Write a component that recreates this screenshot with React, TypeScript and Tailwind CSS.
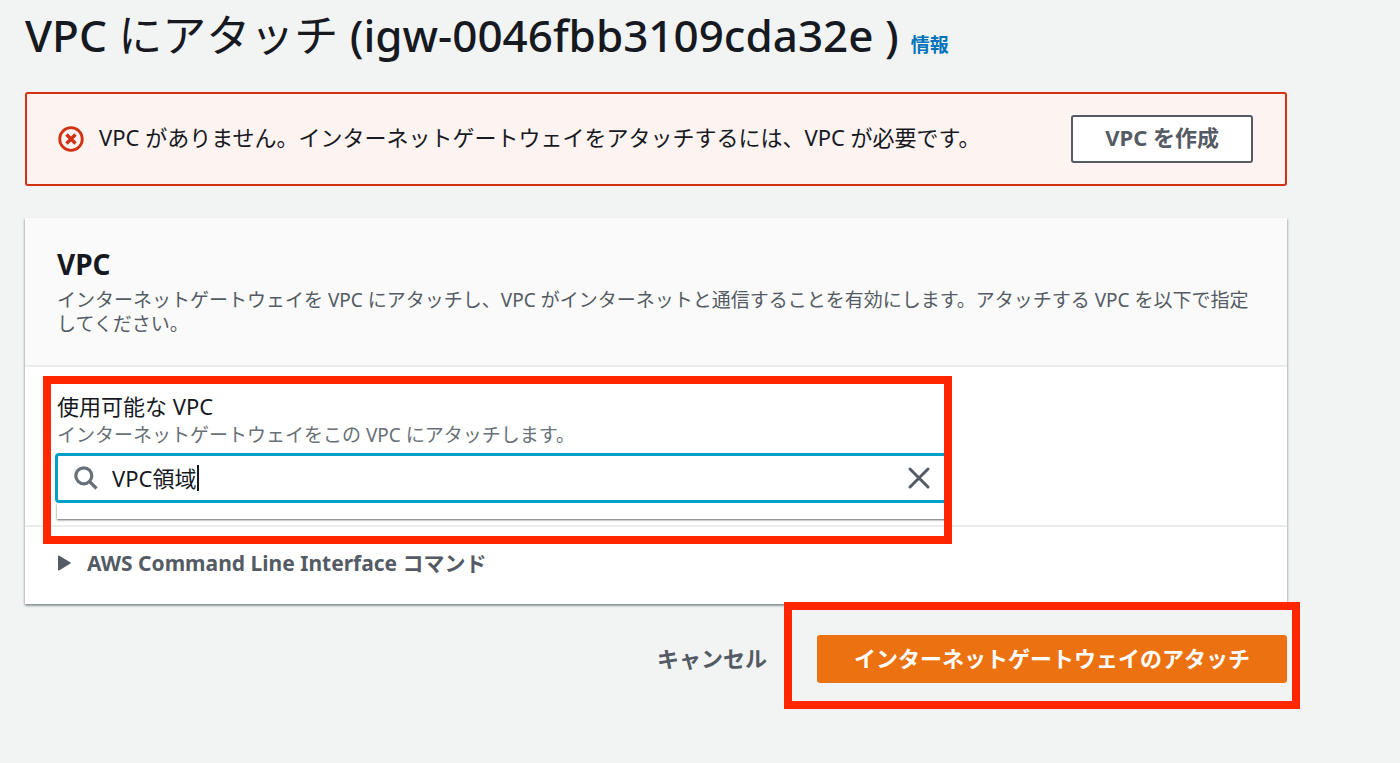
import { useState } from "react";

function ErrorIcon() {
  return (
    <svg className="size-7 shrink-0" viewBox="0 0 28 28" fill="none" stroke="#d13212">
      <circle cx="14" cy="14" r="11.3" strokeWidth="2.8" />
      <path d="M9.5 9.5l9 9M18.5 9.5l-9 9" strokeWidth="3.4" />
    </svg>
  );
}

function SearchIcon() {
  return (
    <svg className="size-6 shrink-0" viewBox="0 0 24 24" fill="none" stroke="#687078" strokeWidth="3.2">
      <circle cx="9.8" cy="9.8" r="8" />
      <path d="M15.5 15.5l7 7" />
    </svg>
  );
}

function CloseIcon() {
  return (
    <svg
      className="size-6"
      viewBox="0 0 24 24"
      fill="none"
      stroke="#545b64"
      strokeWidth="3"
      strokeLinecap="round"
    >
      <path d="M3 3l18 18M21 3L3 21" />
    </svg>
  );
}

function Highlight({ className }: { className: string }) {
  return <div className={`pointer-events-none absolute border-8 border-[#ff2600] ${className}`} />;
}

export default function App() {
  const [search, setSearch] = useState("VPC領域");

  return (
    <div className="min-h-screen bg-[#f2f3f3] pr-[113px] pb-8 pl-[25px] font-['Noto_Sans','Noto_Sans_CJK_JP',sans-serif] text-[22px] leading-7 text-[#16191f]">
      <header className="flex items-baseline gap-3 pt-[5px]">
        <h1 className="text-[44px] leading-[60px] font-medium">
          VPC <span className="font-normal">にアタッチ</span> (igw-0046fbb3109cda32e )
        </h1>
        <a href="#info" className="text-[19px] leading-6 font-bold text-[#0073bb]">
          情報
        </a>
      </header>

      <main>
        <div
          role="alert"
          className="mt-[27px] flex items-center gap-3.5 rounded-[3px] border-2 border-[#d13212] bg-[#fdf3f1] py-[21px] pr-8 pl-[30px]"
        >
          <ErrorIcon />
          <p className="flex-1 pb-1">
            VPC がありません。インターネットゲートウェイをアタッチするには、VPC が必要です。
          </p>
          <button
            type="button"
            className="h-12 rounded-[3px] border-2 border-[#545b64] bg-white px-8 pb-1 font-bold text-[#545b64]"
          >
            VPC を作成
          </button>
        </div>

        <section className="mt-8 bg-white shadow-[0_2px_2px_0_#001c244d,1px_1px_2px_0_#001c2426,-1px_1px_2px_0_#001c2426]">
          <div className="border-b-2 border-[#eaeded] bg-[#fafafa] px-8 pt-7 pb-[29px]">
            <h2 className="text-[28px] leading-9 font-bold">VPC</h2>
            <p className="pt-1.5 text-[19px] leading-6 text-[#545b64]">
              インターネットゲートウェイを VPC にアタッチし、VPC
              がインターネットと通信することを有効にします。アタッチする VPC を以下で指定してください。
            </p>
          </div>

          <div className="border-b-2 border-[#eaeded] px-[30px] pt-[25px] pb-1.5">
            <div className="relative max-w-[893px]">
              <label htmlFor="vpc" className="block pl-0.5">
                使用可能な VPC
              </label>
              <p id="vpc-hint" className="pt-[3px] pb-1.5 pl-0.5 text-[19px] leading-6 text-[#687078]">
                インターネットゲートウェイをこの VPC にアタッチします。
              </p>
              <div className="relative flex h-[50px] items-center gap-3.5 rounded-[4px] border-3 border-[#00a1c9] bg-white pr-3.5 pl-4">
                <SearchIcon />
                <input
                  id="vpc"
                  type="text"
                  aria-describedby="vpc-hint"
                  value={search}
                  onChange={(e) => setSearch(e.target.value)}
                  className="min-w-0 flex-1 bg-transparent caret-transparent outline-none"
                />
                <span className="absolute left-[139px] h-[26px] w-0.5 bg-[#16191f]" />
                <button type="button" aria-label="クリア" onClick={() => setSearch("")}>
                  <CloseIcon />
                </button>
              </div>
              <div className="mx-0.5 h-4 bg-white shadow-[0_1px_2px_0_#00000099]" />
              <Highlight className="-top-4 -right-1 -bottom-[25px] -left-3" />
            </div>
          </div>

          <div className="px-8 pt-[22px] pb-[27px]">
            <button
              type="button"
              className="flex items-center gap-3.5 text-[21px] leading-7 font-bold text-[#545b64]"
            >
              <svg className="h-4 w-4" viewBox="0 0 16 16" fill="#545b64">
                <path d="M1 1.2v13.6q0 1.2 1 .6l11.5-6.8q.8-.6 0-1.2L2 .6q-1-.6-1 .6z" />
              </svg>
              AWS Command Line Interface コマンド
            </button>
          </div>
        </section>

        <div className="mt-[31px] flex items-center justify-end gap-[50px]">
          <button type="button" className="pb-0.5 font-bold text-[#545b64]">
            キャンセル
          </button>
          <div className="relative">
            <button
              type="button"
              className="h-12 rounded-[3px] bg-[#ec7211] px-[37px] pb-0.5 font-bold text-white"
            >
              インターネットゲートウェイのアタッチ
            </button>
            <Highlight className="-top-[33px] -right-[13px] -bottom-[26px] -left-[33px]" />
          </div>
        </div>
      </main>
    </div>
  );
}
